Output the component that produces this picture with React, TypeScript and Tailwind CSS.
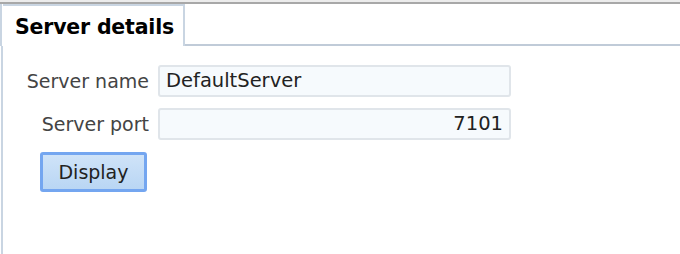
export default function App() {
  return (
    <div
      className="w-[680px] h-[254px] bg-white flex flex-col overflow-hidden"
      style={{ fontFamily: '"DejaVu Sans", Verdana, sans-serif' }}
    >
      {/* window strip */}
      <div className="h-[4px] bg-[#ececec] border-b-2 border-[#a8a8a8] shrink-0" />

      {/* tab bar */}
      <div className="flex h-[42px] shrink-0">
        <div className="w-[3px] border-l-2 border-[#c9d5e2]" />
        <div className="w-[182px] border-t-2 border-r-2 border-[#c9d5e2] flex items-center pl-[12px] pt-[2px]">
          <span className="text-[20.5px] font-bold text-black tracking-[-0.2px]">Server details</span>
        </div>
        <div className="flex-1 border-b-2 border-[#c0cbd8]" />
      </div>

      {/* panel */}
      <div className="flex-1 border-l-2 border-[#c9d5e2] ml-[1px] pt-[19px]">
        <div className="grid grid-cols-[146px_353px] gap-x-[9px] gap-y-[11px] items-center">
          <label className="text-right text-[19px] text-[#444]">Server name</label>
          <div className="h-[32px] rounded-[3px] border-2 border-[#e0e5ea] bg-[#f6fafd] flex items-center px-[6px] text-[19.5px] text-[#222]">
            DefaultServer
          </div>
          <label className="text-right text-[19px] text-[#444]">Server port</label>
          <div className="h-[32px] rounded-[3px] border-2 border-[#e0e5ea] bg-[#f6fafd] flex items-center justify-end px-[6px] text-[19.5px] text-[#222]">
            7101
          </div>
        </div>
        <button className="mt-[12px] ml-[37px] w-[107px] h-[40px] shrink-0 rounded-[3px] border-[3px] border-[#74a6f0] bg-gradient-to-b from-[#cfe3f8] to-[#b9d6f4] text-[19px] text-[#222] flex items-center justify-center">
          Display
        </button>
      </div>
    </div>
  );
}
